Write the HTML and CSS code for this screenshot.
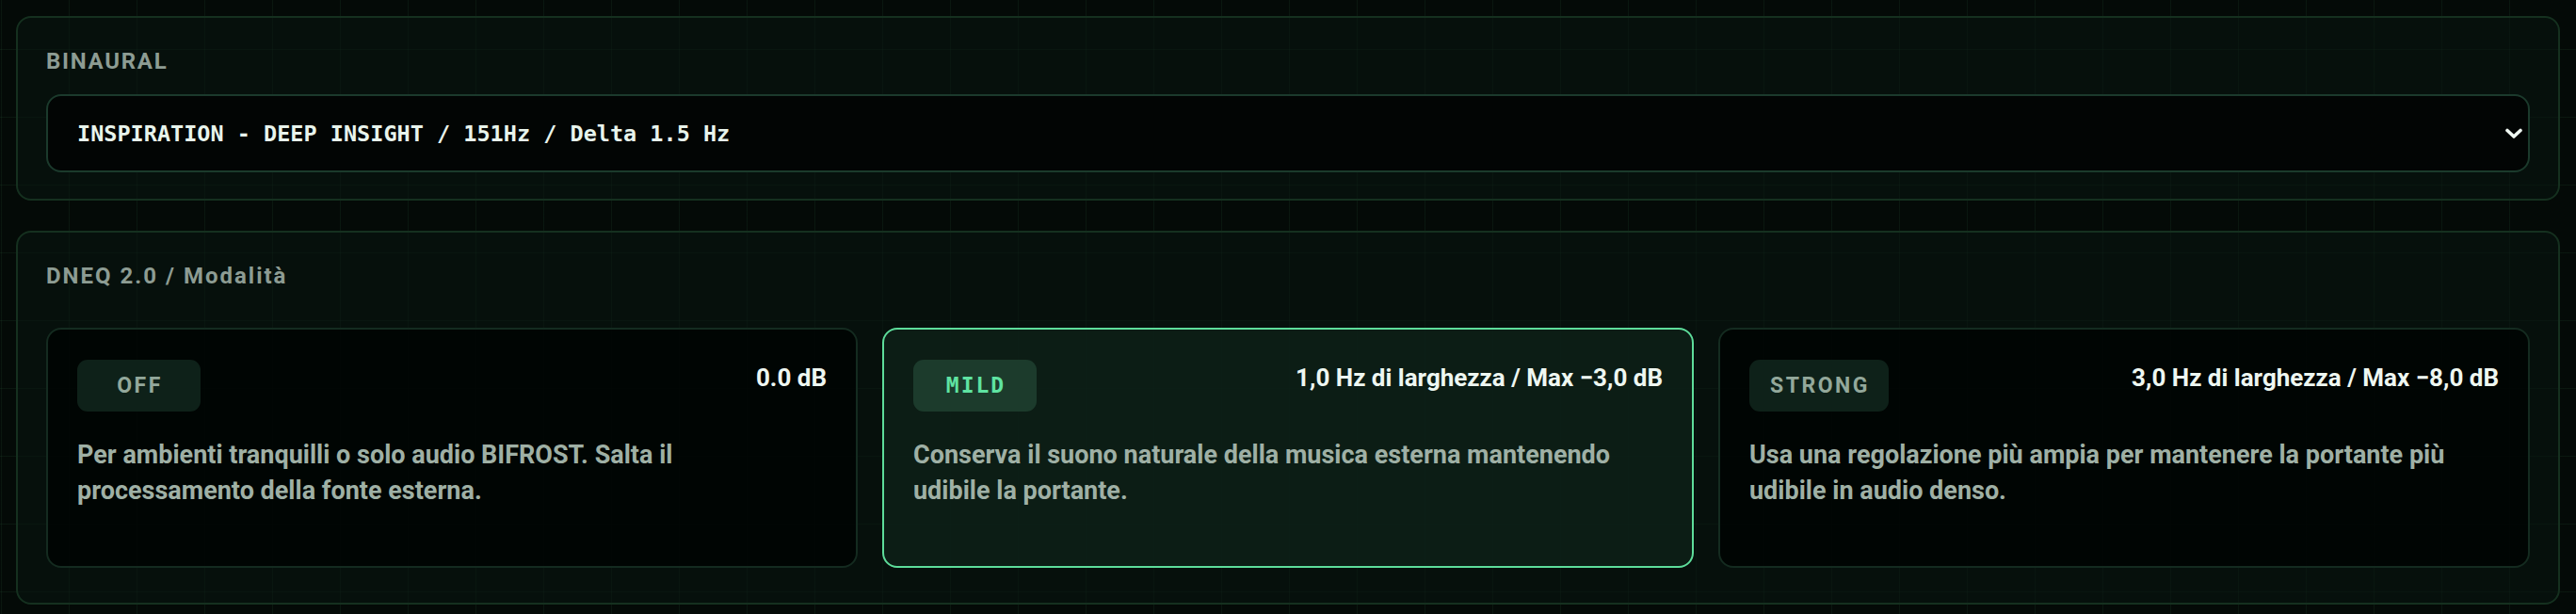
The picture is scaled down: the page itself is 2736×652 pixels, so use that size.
FILE: index.html
```html
<!DOCTYPE html>
<html>
<head>
    <meta charset="UTF-8">
    <title>Binaural / DNEQ</title>
    <link rel="stylesheet" href="styles.css">
</head>
<body>

    <div class="l-wrapper">

        <section class="panel">
            <h2 class="panel__title">BINAURAL</h2>
            <div class="select">
                <select class="select__field" id="binaural">
                    <option>INSPIRATION - DEEP INSIGHT / 151Hz / Delta 1.5 Hz</option>
                </select>
                <svg class="select__arrow" width="18" height="12" viewBox="0 0 18 12">
                    <path d="M2 2.5 L9 9 L16 2.5" fill="none" stroke="currentColor" stroke-width="3.6" stroke-linecap="round" stroke-linejoin="round"/>
                </svg>
            </div>
        </section>

        <section class="panel panel--modes">
            <h2 class="panel__title panel__title--modes">DNEQ 2.0 / Modalità</h2>
            <div class="modes">

                <div class="mode">
                    <div class="mode__head">
                        <span class="mode__chip">OFF</span>
                        <span class="mode__value">0.0 dB</span>
                    </div>
                    <p class="mode__text">Per ambienti tranquilli o solo audio BIFROST. Salta il processamento della fonte esterna.</p>
                </div>

                <div class="mode is-active">
                    <div class="mode__head">
                        <span class="mode__chip">MILD</span>
                        <span class="mode__value">1,0 Hz di larghezza / Max −3,0 dB</span>
                    </div>
                    <p class="mode__text">Conserva il suono naturale della musica esterna mantenendo udibile la portante.</p>
                </div>

                <div class="mode">
                    <div class="mode__head">
                        <span class="mode__chip">STRONG</span>
                        <span class="mode__value">3,0 Hz di larghezza / Max −8,0 dB</span>
                    </div>
                    <p class="mode__text">Usa una regolazione più ampia per mantenere la portante più udibile in audio denso.</p>
                </div>

            </div>
        </section>

    </div>

</body>
</html>
```

FILE: styles.css
```css
HTML {
    background-color: #040a07;
    background-image:
        linear-gradient(to right, rgba(70, 160, 110, .09) 1px, transparent 1px),
        linear-gradient(to bottom, rgba(70, 160, 110, .09) 1px, transparent 1px);
    background-size: 72px 72px;
    background-position: 1px 52px;
    }
BODY {
    margin: 0;
    padding: 17px;
    font: 700 27px/1.4 Roboto, sans-serif;
    color: #9fb0a5;
    }
.l-wrapper {
    display: flex;
    flex-direction: column;
    gap: 32px;
    }

/* Panels */
.panel {
    padding: 32px 30px 28px;
    background: rgba(10, 22, 16, .55);
    border: 2px solid #15301f;
    border-radius: 16px;
    }
    .panel--modes {
        padding-bottom: 37px;
        }
.panel__title {
    margin: 0 0 21px;
    font-size: 24px;
    line-height: 28px;
    font-weight: 700;
    letter-spacing: 1.7px;
    color: #8d9c93;
    }
    .panel__title--modes {
        margin-bottom: 41px;
        letter-spacing: 2px;
        }

/* Select */
.select {
    position: relative;
    }
.select__field {
    display: block;
    width: 100%;
    height: 83px;
    padding: 0 60px 0 31px;
    background: #020504;
    border: 2px solid #1b3a2c;
    border-radius: 16px;
    font: 700 23.5px "DejaVu Sans Mono", "Liberation Mono", monospace;
    color: #e8f4ec;
    appearance: none;
    outline: none;
    }
.select__arrow {
    position: absolute;
    top: 36px;
    right: 8px;
    color: #eef7f1;
    pointer-events: none;
    }

/* DNEQ modes */
.modes {
    display: grid;
    grid-template-columns: repeat(3, 1fr);
    gap: 26px;
    }
.mode {
    box-sizing: border-box;
    min-height: 255px;
    padding: 32px 31px;
    background: rgba(0, 3, 2, .85);
    border: 2px solid #142b20;
    border-radius: 16px;
    }
    .mode.is-active {
        background: rgba(14, 32, 24, .8);
        border-color: #5ddc9a;
        }
.mode__head {
    display: flex;
    justify-content: space-between;
    align-items: flex-start;
    gap: 20px;
    }
.mode__chip {
    box-sizing: border-box;
    min-width: 131px;
    height: 55px;
    padding: 0 20px 0 22px;
    background: #0e2119;
    border-radius: 11px;
    font-size: 23px;
    line-height: 55px;
    letter-spacing: 2.5px;
    text-align: center;
    color: #93a89b;
    }
    .is-active .mode__chip {
        background: #1c3b2c;
        font-family: "DejaVu Sans Mono", monospace;
        font-weight: 600;
        letter-spacing: 2px;
        color: #5fe3a2;
        }
.mode__value {
    margin-top: 2px;
    font-size: 26px;
    line-height: 34px;
    color: #eef7f1;
    white-space: nowrap;
    }
.mode__text {
    margin: 27px 0 0;
    line-height: 38px;
    }
```
